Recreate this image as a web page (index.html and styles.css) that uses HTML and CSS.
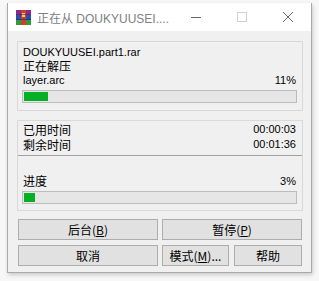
FILE: index.html
```html
<!DOCTYPE html>
<html lang="zh">
<head>
<meta charset="utf-8">
<title>WinRAR</title>
<link rel="stylesheet" href="styles.css">
</head>
<body>
<div class="window">
  <div class="titlebar">
    <svg class="app-icon" width="15" height="15" viewBox="0 0 15 15">
      <rect x="0" y="0" width="15" height="5" fill="#8a2a8e"/>
      <rect x="0" y="5" width="15" height="5" fill="#2a4fb0"/>
      <rect x="0" y="10" width="15" height="5" fill="#2e9a3a"/>
      <rect x="5" y="0" width="5" height="15" fill="#c8402a"/>
      <rect x="6" y="3" width="3" height="4" fill="#f2d060"/>
      <rect x="0" y="4" width="15" height="1" fill="#5a1a5e" opacity="0.6"/>
      <rect x="0" y="9" width="15" height="1" fill="#1a2f70" opacity="0.6"/>
    </svg>
    <span class="title">正在从 DOUKYUUSEI....</span>
    <div class="controls">
      <span class="ctl">
        <svg width="10" height="10" viewBox="0 0 10 10"><line x1="0" y1="5.5" x2="10" y2="5.5" stroke="#666" stroke-width="1"/></svg>
      </span>
      <span class="ctl">
        <svg width="10" height="10" viewBox="0 0 10 10"><rect x="0.5" y="0.5" width="9" height="9" fill="none" stroke="#d0d0d0" stroke-width="1"/></svg>
      </span>
      <span class="ctl">
        <svg width="10" height="10" viewBox="0 0 10 10"><path d="M0 0 L10 10 M10 0 L0 10" stroke="#666" stroke-width="1"/></svg>
      </span>
    </div>
  </div>
  <div class="content">
    <div class="group group-top">
      <div class="line">DOUKYUUSEI.part1.rar</div>
      <div class="line cjk">正在解压</div>
      <div class="line row"><span>layer.arc</span><span>11%</span></div>
      <div class="bar"><div class="fill" style="width:9%"></div></div>
    </div>
    <div class="group group-bottom">
      <div class="section-times">
        <div class="line tline row"><span class="cjk">已用时间</span><span>00:00:03</span></div>
        <div class="line tline row"><span class="cjk">剩余时间</span><span>00:01:36</span></div>
      </div>
      <div class="section-progress">
        <div class="line row"><span class="cjk">进度</span><span>3%</span></div>
        <div class="bar"><div class="fill" style="width:4%"></div></div>
      </div>
    </div>
    <div class="buttons">
      <div class="btn-row">
        <button class="btn wide">后台(<u>B</u>)</button>
        <button class="btn wide">暂停(<u>P</u>)</button>
      </div>
      <div class="btn-row">
        <button class="btn wide">取消</button>
        <button class="btn mode">模式(<u>M</u>)...</button>
        <button class="btn help">帮助</button>
      </div>
    </div>
  </div>
</div>
</body>
</html>
```
FILE: styles.css
```css
html, body {
  margin: 0;
  padding: 0;
}
body {
  width: 319px;
  height: 281px;
  background: #f7f7f7;
  font-family: "Liberation Sans", "Noto Sans CJK SC", sans-serif;
  font-size: 11px;
  color: #000;
  overflow: hidden;
  padding: 3px 0 0 7px;
  box-sizing: border-box;
}
.window {
  width: 305px;
  height: 270px;
  background: #f0f0f0;
  border: 1px solid #a9a9a9;
  border-top: none;
  box-sizing: border-box;
  box-shadow: 1px 2px 4px rgba(0,0,0,0.18);
  display: flex;
  flex-direction: column;
}
.titlebar {
  height: 28px;
  background: #fff;
  display: flex;
  align-items: center;
  flex-shrink: 0;
}
.app-icon {
  margin-left: 8px;
  flex-shrink: 0;
}
.title {
  margin-left: 6px;
  color: #808080;
  font-family: "Liberation Sans", "Noto Sans CJK SC", sans-serif;
  font-size: 12px;
  flex: 1;
  white-space: nowrap;
}
.controls {
  display: flex;
  height: 28px;
}
.ctl {
  width: 46px;
  height: 28px;
  display: flex;
  align-items: center;
  justify-content: center;
}
.content {
  padding: 10px 8px 0 9px;
  display: flex;
  flex-direction: column;
}
.group {
  border: 1px solid #d9d9d9;
  box-sizing: border-box;
}
.group-top {
  height: 70px;
  padding: 3px 5px 0 5px;
}
.line {
  height: 14px;
  line-height: 14px;
  white-space: nowrap;
}
.tline {
  height: 15px;
  line-height: 15px;
}
.cjk {
  font-family: "Noto Sans CJK SC", sans-serif;
  font-size: 12px;
}
.row {
  display: flex;
  justify-content: space-between;
  padding-right: 1px;
}
.bar {
  margin-top: 3px;
  margin-left: -1px;
  height: 13px;
  border: 1px solid #bcbcbc;
  background: #e6e6e6;
  box-sizing: border-box;
  padding: 1px;
}
.fill {
  height: 100%;
  background: #06b025;
}
.group-bottom {
  margin-top: 9px;
  height: 91px;
}
.section-times {
  height: 35px;
  padding: 1px 5px 0 5px;
  border-bottom: 1px solid #a0a0a0;
  box-sizing: border-box;
}
.section-progress {
  padding: 18px 5px 0 5px;
}
.buttons {
  margin-top: 8px;
  padding-left: 1px;
  display: flex;
  flex-direction: column;
  gap: 5px;
  width: 284px;
}
.btn-row {
  display: flex;
  gap: 4px;
}
.btn {
  height: 21px;
  border: 1px solid #adadad;
  background: #e1e1e1;
  font-family: "Noto Sans CJK SC", sans-serif;
  font-size: 12px;
  color: #000;
  padding: 0;
  margin: 0;
  line-height: 19px;
  box-sizing: border-box;
}
.btn u {
  text-decoration: underline;
}
.wide {
  width: 140px;
}
.mode {
  width: 67px;
}
.help {
  width: 68px;
  margin-left: 1px;
}
```
